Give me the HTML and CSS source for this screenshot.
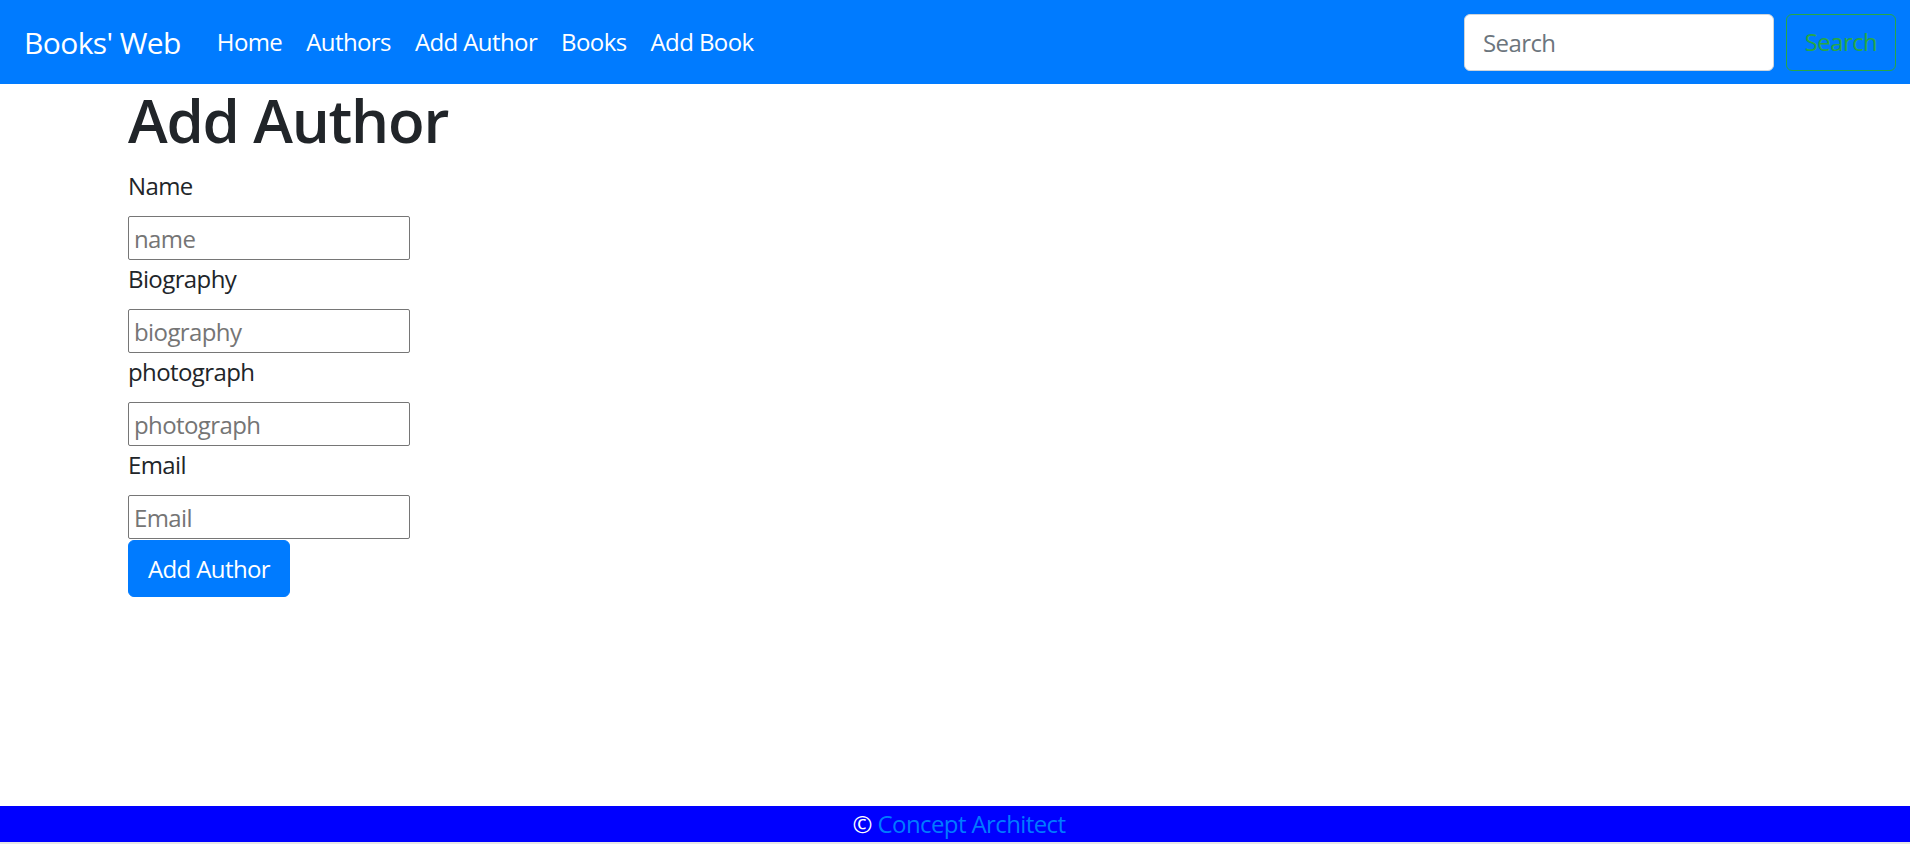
FILE: index.html
```html
<!DOCTYPE html>
<html lang="en">
<head>
<meta charset="utf-8">
<title>Books' Web - Add Author</title>
<link rel="stylesheet" href="styles.css">
</head>
<body>
<nav class="navbar">
  <a class="brand" href="#">Books' Web</a>
  <ul class="nav">
    <li><a href="#">Home</a></li>
    <li><a href="#">Authors</a></li>
    <li><a href="#">Add Author</a></li>
    <li><a href="#">Books</a></li>
    <li><a href="#">Add Book</a></li>
  </ul>
  <form class="search">
    <input class="search-input" type="search" placeholder="Search">
    <button class="search-btn" type="button">Search</button>
  </form>
</nav>
<main class="container">
  <h1 class="title">Add Author</h1>
  <form class="author-form">
    <label class="label">Name</label>
    <input class="field" type="text" placeholder="name">
    <label class="label">Biography</label>
    <input class="field" type="text" placeholder="biography">
    <label class="label">photograph</label>
    <input class="field" type="text" placeholder="photograph">
    <label class="label">Email</label>
    <input class="field" type="text" placeholder="Email">
    <button class="submit" type="button">Add Author</button>
  </form>
</main>
<footer class="footer">© <a class="footer-link" href="#">Concept Architect</a></footer>
<div class="bottom-edge"></div>
</body>
</html>
```
FILE: styles.css
```css
html, body {
  height: 100%;
}
body {
  margin: 0;
  display: flex;
  flex-direction: column;
  font-family: "Open Sans", "Noto Sans", sans-serif;
  font-size: 24px;
  line-height: 1.5;
  letter-spacing: -0.025em;
  color: #212529;
  background: #fff;
}
.navbar {
  display: flex;
  align-items: center;
  height: 84px;
  box-sizing: border-box;
  padding: 12px 14px 12px 24px;
  background: #007bff;
}
.brand {
  font-size: 30px;
  line-height: 45px;
  padding: 7.5px 0;
  margin-right: 24px;
  color: #fff;
  text-decoration: none;
}
.nav {
  display: flex;
  list-style: none;
  margin: 0;
  padding: 0;
}
.nav a {
  display: block;
  padding: 12px;
  line-height: 36px;
  color: #fff;
  text-decoration: none;
}
.search {
  margin: 0 0 0 auto;
  display: flex;
  align-items: center;
}
.search-input {
  width: 310px;
  height: 57px;
  box-sizing: border-box;
  padding: 9px 18px;
  margin-right: 12px;
  border: 1.5px solid #ced4da;
  border-radius: 6px;
  font: inherit;
  letter-spacing: inherit;
  color: #495057;
  background: #fff;
  outline: none;
}
.search-input::placeholder {
  color: #6c757d;
}
.search-btn {
  width: 110px;
  height: 57px;
  box-sizing: border-box;
  padding: 9px 0;
  border: 1.5px solid #28a745;
  border-radius: 6px;
  background: transparent;
  color: #28a745;
  font: inherit;
  letter-spacing: inherit;
  cursor: pointer;
}
.container {
  flex: 1;
  width: 1654px;
  margin: 0 auto;
}
.title {
  margin: 0 0 12px;
  font-size: 60px;
  font-weight: 600;
  line-height: 1.2;
  letter-spacing: -0.02em;
}
.author-form {
  margin: 0;
}
.label {
  display: block;
  height: 36px;
  margin-bottom: 12px;
}
.field {
  display: block;
  width: 282px;
  height: 44px;
  box-sizing: border-box;
  margin: 0 0 1px;
  padding: 1px 5px;
  border: 1px solid #767676;
  border-radius: 2px;
  font: inherit;
  letter-spacing: inherit;
  color: #212529;
  background: #fff;
}
.field::placeholder {
  color: #757575;
}
.submit {
  display: block;
  width: 162px;
  height: 57px;
  box-sizing: border-box;
  padding: 9px 0;
  border: 1.5px solid #007bff;
  border-radius: 6px;
  background: #007bff;
  color: #fff;
  font: inherit;
  letter-spacing: inherit;
}
.footer {
  height: 36px;
  box-sizing: border-box;
  padding-left: 8px;
  line-height: 36px;
  text-align: center;
  background: #0000ff;
  color: #fff;
}
.footer-link {
  color: #007bff;
  text-decoration: none;
}
.bottom-edge {
  height: 2px;
  background: #e6e6e6;
}
```
